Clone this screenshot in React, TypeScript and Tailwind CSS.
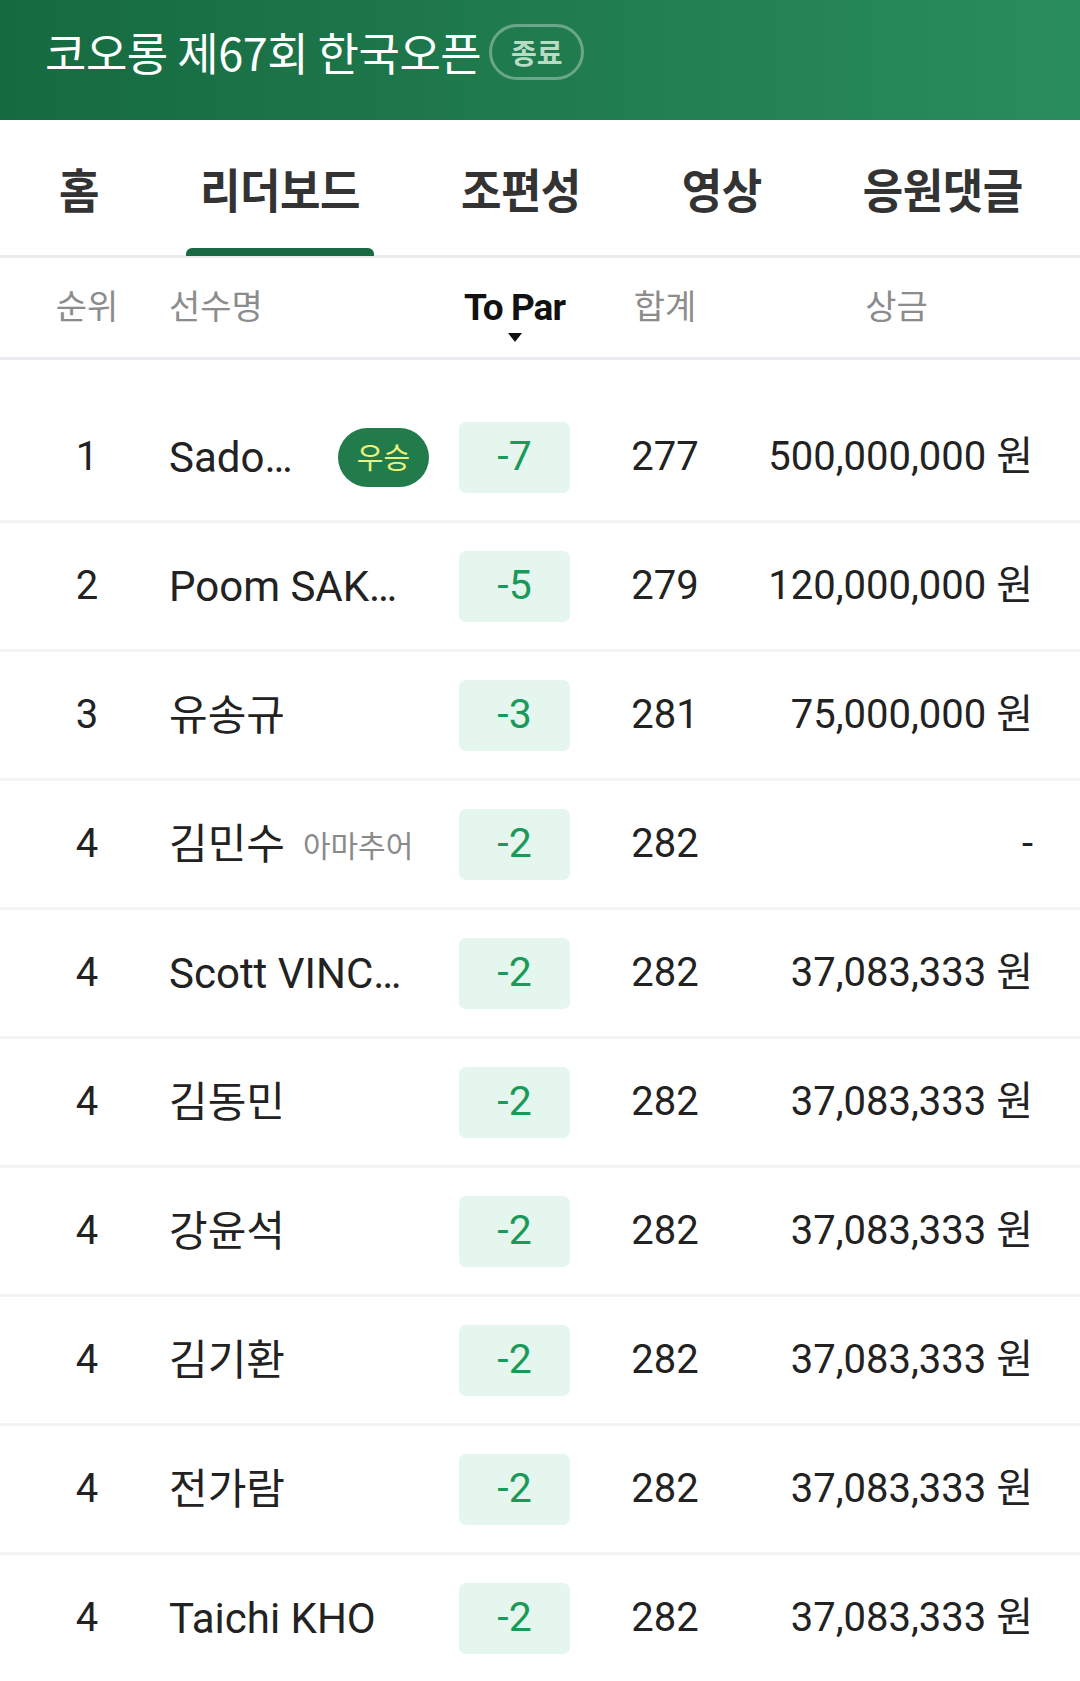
import React from 'react';

interface Player {
  rank: number;
  name: string;
  winner?: boolean;
  amateur?: boolean;
  toPar: number;
  total: number;
  prize: string;
}

const players: Player[] = [
  { rank: 1, name: 'Sadom KAEWKANJANA', winner: true, toPar: -7, total: 277, prize: '500,000,000 원' },
  { rank: 2, name: 'Poom SAKSANSIN', toPar: -5, total: 279, prize: '120,000,000 원' },
  { rank: 3, name: '유송규', toPar: -3, total: 281, prize: '75,000,000 원' },
  { rank: 4, name: '김민수', amateur: true, toPar: -2, total: 282, prize: '-' },
  { rank: 4, name: 'Scott VINCENT', toPar: -2, total: 282, prize: '37,083,333 원' },
  { rank: 4, name: '김동민', toPar: -2, total: 282, prize: '37,083,333 원' },
  { rank: 4, name: '강윤석', toPar: -2, total: 282, prize: '37,083,333 원' },
  { rank: 4, name: '김기환', toPar: -2, total: 282, prize: '37,083,333 원' },
  { rank: 4, name: '전가람', toPar: -2, total: 282, prize: '37,083,333 원' },
  { rank: 4, name: 'Taichi KHO', toPar: -2, total: 282, prize: '37,083,333 원' },
];

const tabs = ['홈', '리더보드', '조편성', '영상', '응원댓글'];

const font = "font-['Roboto','Noto_Sans_CJK_KR',sans-serif]";

const Header: React.FC = () => (
  <div className="h-[120px] bg-gradient-to-r from-[#166a40] to-[#298d5b] flex items-center pl-[45px] pb-[16px]">
    <h1 className="text-[45px] text-white font-normal tracking-[-0.5px] font-['Noto_Sans_CJK_KR',sans-serif]">
      코오롱 제67회 한국오픈
    </h1>
    <span className="ml-[8px] h-[56px] w-[95px] rounded-full border-[3px] border-[#ffffff55] flex items-center justify-center text-[28px] font-bold text-[#b9dcc6] font-['Noto_Sans_CJK_KR',sans-serif]">
      종료
    </span>
  </div>
);

const Tabs: React.FC = () => (
  <div className="h-[138px] border-b-[3px] border-[#e9ebee] flex items-stretch pl-[59px] gap-[101px] font-['Noto_Sans_CJK_KR',sans-serif]">
    {tabs.map((t) => (
      <div key={t} className="relative flex items-center">
        <span className="text-[44px] font-bold text-[#333] tracking-[-0.5px] scale-y-[1.06]">{t}</span>
        {t === '리더보드' && (
          <span className="absolute -left-[14px] -right-[14px] -bottom-[1px] h-[8px] rounded-t-[6px] bg-[#176a41]" />
        )}
      </div>
    ))}
  </div>
);

const Row: React.FC<{ p: Player }> = ({ p }) => (
  <div className={`h-[129px] flex items-center border-b-[3px] border-[#f3f4f5] pl-[40px] ${font} text-[40px] text-[#222]`}>
    <div className="w-[94px] text-center">{p.rank}</div>
    <div className="ml-[35px] w-[260px] flex items-center">
      <span className="min-w-0 max-w-[245px] truncate text-[42px]">{p.name}</span>
      {p.winner && (
        <span className="ml-[40px] shrink-0 w-[91px] h-[59px] rounded-full bg-[#217b4b] text-[#ecf27d] text-[29px] flex items-center justify-center font-['Noto_Sans_CJK_KR',sans-serif]">
          우승
        </span>
      )}
      {p.amateur && (
        <span className="ml-[18px] shrink-0 text-[30px] text-[#8a8a8a] font-['Noto_Sans_CJK_KR',sans-serif]">아마추어</span>
      )}
    </div>
    <div className="ml-[30px] w-[111px] h-[71px] rounded-[7px] bg-[#e4f6ee] text-[#1a9a58] text-[41px] flex items-center justify-center">
      {p.toPar}
    </div>
    <div className="w-[190px] text-center">{p.total}</div>
    <div className="w-[273px] text-right">{p.prize}</div>
  </div>
);

export default function App() {
  return (
    <div className="w-[1080px] bg-white overflow-hidden">
      <Header />
      <Tabs />
      <div className={`h-[102px] border-b-[3px] border-[#e9ebee] flex items-center pl-[40px] text-[34px] text-[#8c8c8c] ${font}`}>
        <div className="w-[94px] text-center">순위</div>
        <div className="ml-[35px] w-[260px]">선수명</div>
        <div className="ml-[30px] w-[111px] relative text-center text-[37px] font-bold text-[#111] tracking-[-1px]">
          To Par
          <span className="absolute left-1/2 -translate-x-1/2 top-[53px] w-0 h-0 border-l-[7px] border-r-[7px] border-t-[9px] border-l-transparent border-r-transparent border-t-[#111]" />
        </div>
        <div className="w-[190px] text-center">합계</div>
        <div className="w-[273px] text-center">상금</div>
      </div>
      <div className="pt-[34px]">
        {players.map((p, i) => (
          <Row key={i} p={p} />
        ))}
      </div>
    </div>
  );
}
